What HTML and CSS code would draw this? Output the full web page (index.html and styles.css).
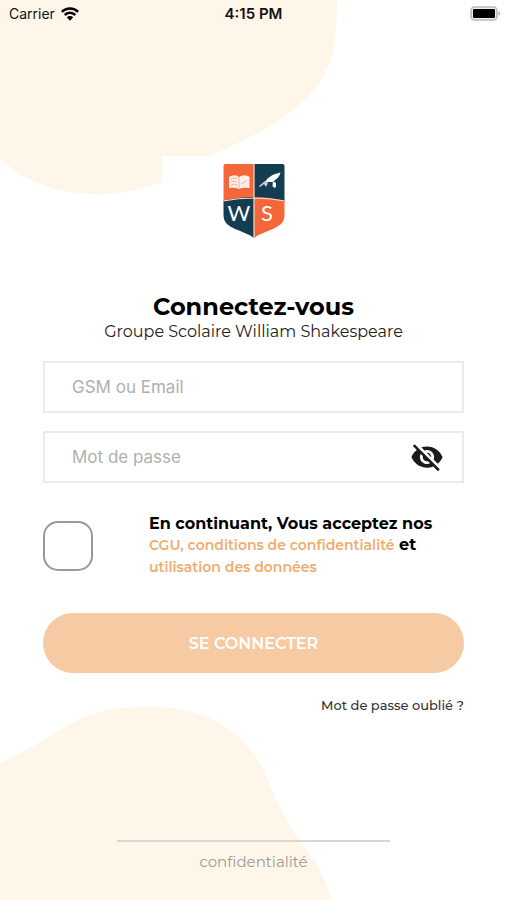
FILE: index.html
```html
<!DOCTYPE html>
<html lang="fr">
<head>
<meta charset="utf-8">
<meta name="viewport" content="width=device-width, initial-scale=1">
<title>Connectez-vous</title>
<link rel="stylesheet" href="styles.css">
</head>
<body>
<div class="screen">
  <svg class="blob blob-top" width="340" height="196" viewBox="0 0 340 196" aria-hidden="true">
    <path d="M0 0H337C337 34 334 61 322 78C306 105 280 122 250 137C218 154 187 165 160 183C139 190 119 194 96 194C60 194 25 182 0 159Z"/>
  </svg>
  <svg class="blob blob-bottom" width="336" height="196" viewBox="0 704 336 196" aria-hidden="true">
    <path d="M0 763C35 747 56 731 80 719C105 708 126 707 150 707C177 707 190 710 207 717C237 729 258 754 267 778C276 800 286 822 300 841C316 860 325 878 332 900H0Z"/>
  </svg>

  <header class="status">
    <div class="status-left">
      <span>Carrier</span>
      <svg width="18" height="14" viewBox="0 0 18 14" aria-hidden="true">
        <g fill="none" stroke="#000" stroke-width="2.5">
          <path d="M.8 4.9C5.4.4 12.6.4 17.2 4.9"/>
          <path d="M3.7 8C6.7 5 11.3 5 14.3 8"/>
        </g>
        <path d="M5.8 10.3C7.600 8.500 10.400 8.500 12.200 10.300L9 13.700Z"/>
      </svg>
    </div>
    <span class="status-time">4:15 PM</span>
    <svg class="battery" width="31" height="15" viewBox="0 0 31 15" aria-hidden="true">
      <rect x="1" y="1" width="26" height="13" rx="3.500" fill="#eee" stroke="#bbb" stroke-width="1.600"/>
      <rect x="3" y="3" width="22" height="9" rx="1"/>
      <path d="M28.600 5.300C30.600 6 30.600 9 28.600 9.700Z" fill="#aaa"/>
    </svg>
  </header>

  <main class="login">
    <div class="logo">
      <svg width="62" height="74" viewBox="0 0 62 74" role="img" aria-label="Groupe Scolaire William Shakespeare">
        <defs>
          <clipPath id="shield"><path d="M2.500 0H59.500Q61.500 0 61.500 2V51C61.500 59 56 62 50 65C43 68 36 70 31 74C26 70 19 68 12 65C6 62 .5 59 .5 51V2Q.5 0 2.500 0Z"/></clipPath>
        </defs>
        <g clip-path="url(#shield)">
          <path fill="#f56638" d="M0 0H31V38H0Z"/>
          <path fill="#143d52" d="M31 0H62V38H31Z"/>
          <path fill="#143d52" d="M0 37Q16 33 31 33V74H0Z"/>
          <path fill="#f56638" d="M31 33Q46 33 62 37V74H31Z"/>
          <path fill="none" stroke="#f9ded1" stroke-width="1.200" d="M31 0V74M0 37Q31 31 62 37"/>
        </g>
        <path fill="#fff0e8" d="M6 13L8 12Q13 10 16 13Q20 10 25 12L26.500 13V24Q20 23 16 25Q12 23 6 24Z"/>
        <path fill="none" stroke="#f79a79" stroke-width=".8" d="M16 13V24M8 15Q11 13 14 15M8 18Q11 16 14 18M8 21Q11 19 14 21M18 20Q22 18 24 16"/>
        <path fill="#fff" d="M57.500 8.500C50 10 45 13 42 18L49 18L51 17C54 15 57 12 57.500 8.500ZM50 17L53 19V23Q51 25 49.500 22Z"/>
        <path fill="#c7d0d4" d="M36 22L42 17L45 19L43 23L41 20L37 23Z"/>
        <g fill="#fff" class="logo-letters" text-anchor="middle">
          <text x="16" y="57">W</text>
          <text x="44" y="57">S</text>
        </g>
      </svg>
    </div>

    <h1>Connectez-vous</h1>
    <p class="school">Groupe Scolaire William Shakespeare</p>

    <form class="form">
      <div class="field">
        <input type="text" aria-label="GSM ou Email" placeholder="GSM ou Email">
      </div>
      <div class="field">
        <input type="password" aria-label="Mot de passe" placeholder="Mot de passe">
        <button class="reveal" type="button" aria-label="Afficher le mot de passe">
          <svg width="34" height="34" viewBox="0 0 24 24" aria-hidden="true">
            <path fill="#1b1b1b" d="M12 7c2.760 0 5 2.240 5 5 0 .65-.13 1.260-.36 1.830l2.920 2.920c1.510-1.260 2.700-2.890 3.430-4.750-1.730-4.390-6-7.500-11-7.500-1.400 0-2.740.25-3.980.7l2.160 2.160C10.740 7.130 11.350 7 12 7zM2 4.270l2.280 2.280.46.46C3.080 8.300 1.780 10.020 1 12c1.730 4.390 6 7.500 11 7.500 1.550 0 3.030-.3 4.380-.84l.42.42L19.730 22 21 20.730 3.270 3 2 4.270zM7.530 9.800l1.550 1.550c-.05.21-.08.43-.08.65 0 1.660 1.340 3 3 3 .22 0 .44-.03.65-.08l1.550 1.550c-.67.33-1.410.53-2.200.53-2.760 0-5-2.240-5-5 0-.79.2-1.530.53-2.200zm4.310-.78l3.150 3.150.02-.16c0-1.660-1.340-3-3-3l-.17.01z"/>
          </svg>
        </button>
      </div>

      <div class="consent">
        <input type="checkbox" id="accept">
        <div class="consent-text">
          <label for="accept">En continuant, Vous acceptez nos</label><br>
          <a href="#cgu">CGU, conditions de confidentialité</a> et<br>
          <a href="#donnees">utilisation des données</a>
        </div>
      </div>

      <button class="submit" type="submit">SE CONNECTER</button>
      <a class="forgot" href="#oubli">Mot de passe oublié ?</a>
    </form>
  </main>

  <footer class="footer">
    <a href="#confidentialite">confidentialité</a>
  </footer>
</div>
</body>
</html>
```
FILE: styles.css
```css
* {
  box-sizing: border-box;
}

body {
  margin: 0;
  background: #fff;
  color: #000;
  font-family: Montserrat, Inter, sans-serif;
}

a {
  color: inherit;
  text-decoration: none;
}

.screen {
  position: relative;
  display: flex;
  flex-direction: column;
  min-height: 100vh;
  isolation: isolate;
}

.blob {
  position: absolute;
  left: 0;
  z-index: -1;
  fill: #fff6ea;
}

.blob-top {
  top: 0;
}

.blob-bottom {
  bottom: 0;
}

.status {
  display: grid;
  grid-template-columns: 1fr auto 1fr;
  align-items: center;
  height: 27px;
  padding: 0 6px;
  font-family: Inter, sans-serif;
  font-size: 14px;
  color: #111;
}

.status-left {
  display: flex;
  align-items: center;
  gap: 6px;
  padding-left: 3px;
}

.status-time {
  font-size: 15px;
  font-weight: 600;
}

.battery {
  justify-self: end;
}

.login {
  display: flex;
  flex-direction: column;
  padding: 129px 43px 0;
}

.logo {
  display: flex;
  justify-content: center;
  align-self: center;
  width: 184px;
  padding: 8px 0;
  background: #fff;
}

.logo-letters {
  font-family: Lato, sans-serif;
  font-size: 22px;
}

h1 {
  margin: 46px 0 0;
  font-size: 24px;
  line-height: 30px;
  font-weight: 700;
  text-align: center;
}

.school {
  margin: 0;
  font-size: 16px;
  line-height: 20px;
  text-align: center;
  color: #222;
}

.form {
  display: flex;
  flex-direction: column;
  gap: 18px;
  margin-top: 19px;
}

.field {
  display: flex;
  align-items: center;
  height: 52px;
  padding: 0 18px 0 27px;
  border: 2px solid #ebebeb;
  background: #fff;
}

.field input {
  flex: 1;
  min-width: 0;
  padding: 0;
  border: 0;
  outline: 0;
  background: none;
  font-family: Inter, sans-serif;
  font-size: 17px;
}

.field input::placeholder {
  color: #b0b0b0;
}

.reveal {
  display: flex;
  padding: 0;
  border: 0;
  background: none;
}

.consent {
  display: flex;
  align-items: center;
  gap: 56px;
  margin-top: 12px;
}

.consent input {
  flex: none;
  appearance: none;
  width: 50px;
  height: 50px;
  margin: 0;
  border: 2px solid #999;
  border-radius: 15px;
  background: #fff;
}

.consent-text {
  font-size: 16px;
  line-height: 21px;
  font-weight: 700;
  white-space: nowrap;
}

.consent-text a {
  font-size: 14px;
  font-weight: 600;
  color: #f0ac6e;
}

.submit {
  height: 60px;
  margin-top: 17px;
  border: 0;
  border-radius: 30px;
  background: #f6caa2;
  color: #fff;
  font-family: inherit;
  font-size: 16px;
  font-weight: 600;
}

.forgot {
  align-self: flex-end;
  margin-top: 4px;
  font-size: 13px;
  line-height: 20px;
  font-weight: 500;
  color: #333;
}

.footer {
  display: flex;
  justify-content: center;
  align-self: center;
  width: 54%;
  margin-top: auto;
  margin-bottom: 28px;
  padding-top: 10px;
  border-top: 2px solid #dcd6d3;
  font-size: 15px;
  line-height: 20px;
  color: #a09a94;
}
```
